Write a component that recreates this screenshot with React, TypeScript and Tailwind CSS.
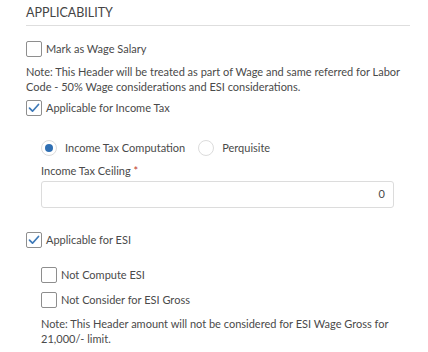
import { useState } from 'react';

const Checkbox = ({ checked, label }: { checked?: boolean; label: string }) => (
  <label className="flex h-[16px] items-center">
    <span className="flex h-[16px] w-[16px] items-center justify-center rounded-[2px] border border-[#8e8e8e] bg-white">
      {checked && (
        <svg width="12" height="10" viewBox="0 0 12 10" fill="none">
          <path d="M1.5 5.2 L4.5 8.2 L10.5 1.5" stroke="#3d79b8" strokeWidth="1.7" strokeLinecap="round" strokeLinejoin="round" />
        </svg>
      )}
    </span>
    <span className="ml-[4px] text-[11px] leading-[16px] text-[#4a4a4a]">{label}</span>
  </label>
);

const Radio = ({ checked, label }: { checked?: boolean; label: string }) => (
  <label className="flex h-[16px] items-center">
    <span className="flex h-[16px] w-[16px] items-center justify-center rounded-full border border-[#dcdcdc] bg-white">
      {checked && <span className="h-[8px] w-[8px] rounded-full bg-[#2f6fb3]"></span>}
    </span>
    <span className="ml-[8px] text-[11px] leading-[16px] text-[#4a4a4a]">{label}</span>
  </label>
);

export default function App() {
  const [ceiling] = useState('0');

  return (
    <div className="h-[352px] w-[428px] bg-white pl-[26px] pr-[18px]" style={{ fontFamily: 'Lato, "Open Sans", sans-serif' }}>
      {/* Section header */}
      <div className="border-b border-[#dedede] pb-[4px] pt-[5px] text-[12.5px] leading-[16px] text-[#444]">
        APPLICABILITY
      </div>

      <div className="mt-[15px]">
        <Checkbox label="Mark as Wage Salary" />
      </div>
      <p className="mt-[7px] text-[11px] leading-[15px] text-[#4a4a4a]">
        Note: This Header will be treated as part of Wage and same referred for Labor Code - 50% Wage considerations and ESI considerations.
      </p>

      <div className="mt-[6px]">
        <Checkbox checked label="Applicable for Income Tax" />
      </div>

      <div className="pl-[15px]">
        <div className="mt-[24px] flex h-[15px] items-center gap-[13px]">
          <Radio checked label="Income Tax Computation" />
          <Radio label="Perquisite" />
        </div>
        <div className="mt-[9px] text-[11px] leading-[14px] text-[#4a4a4a]">
          Income Tax Ceiling <span className="text-[#c0392b]">*</span>
        </div>
        <div className="mt-[3px] flex h-[27px] w-[353px] items-center justify-end rounded-[3px] border border-[#dcdcdc] px-[8px] text-[11px] text-[#4a4a4a]">
          {ceiling}
        </div>
      </div>

      <div className="mt-[24px]">
        <Checkbox checked label="Applicable for ESI" />
      </div>

      <div className="pl-[15px]">
        <div className="mt-[19px]">
          <Checkbox label="Not Compute ESI" />
        </div>
        <div className="mt-[9px]">
          <Checkbox label="Not Consider for ESI Gross" />
        </div>
        <p className="mt-[8px] text-[11px] leading-[15px] text-[#4a4a4a]">
          Note: This Header amount will not be considered for ESI Wage Gross for 21,000/- limit.
        </p>
      </div>
    </div>
  );
}
